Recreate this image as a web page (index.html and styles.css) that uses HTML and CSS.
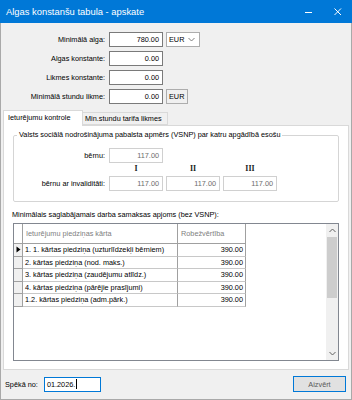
FILE: index.html
```html
<!DOCTYPE html>
<html>
    <head>
        <title>Algas konstanšu tabula - apskate</title>
        <link rel="stylesheet" href="styles.css">
    </head>

    <body>

        <div class="window">

            <div class="titlebar">
                <span class="title">Algas konstanšu tabula - apskate</span>
                <span class="win_btn min_btn">
                    <svg width="8" height="8" viewBox="0 0 8 8"><path d="M0 4.5h7" stroke="#fff" stroke-width="1"/></svg>
                </span>
                <span class="win_btn close_btn">
                    <svg width="8" height="8" viewBox="0 0 8 8"><path d="M0.5 0.5l6.5 6.5M7 0.5l-6.5 6.5" stroke="#fff" stroke-width="1"/></svg>
                </span>
            </div>

            <div class="content">

                <div class="fields">
                    <label>Minimālā alga:</label>
                    <div class="input">780.00</div>
                    <div class="select">EUR
                        <svg width="7" height="5" viewBox="0 0 7 5"><path d="M0.5 1l3 3 3-3" fill="none" stroke="#707070" stroke-width="0.9"/></svg>
                    </div>

                    <label>Algas konstante:</label>
                    <div class="input">0.00</div>
                    <div></div>

                    <label>Likmes konstante:</label>
                    <div class="input">0.00</div>
                    <div></div>

                    <label>Minimālā stundu likme:</label>
                    <div class="input">0.00</div>
                    <div class="unit">EUR</div>
                </div>

                <div class="tabs">
                    <div class="tab active">Ieturējumu kontrole</div>
                    <div class="tab">Min.stundu tarifa likmes</div>
                </div>

                <div class="panel">

                    <fieldset class="group">
                        <legend>Valsts sociālā nodrošinājuma pabalsta apmērs (VSNP) par katru apgādībā esošu</legend>
                        <div class="group_grid">
                            <label>bērnu:</label>
                            <div class="input disabled">117.00</div>
                            <div></div>
                            <div></div>

                            <div></div>
                            <div class="roman">I</div>
                            <div class="roman">II</div>
                            <div class="roman">III</div>

                            <label>bērnu ar invaliditāti:</label>
                            <div class="input disabled">117.00</div>
                            <div class="input disabled">117.00</div>
                            <div class="input disabled">117.00</div>
                        </div>
                    </fieldset>

                    <div class="caption">Minimālais saglabājamais darba samaksas apjoms (bez VSNP):</div>

                    <div class="datagrid">
                        <div class="rows">
                            <div class="row head">
                                <div class="sel"></div>
                                <div class="cell">Ieturējumu piedziņas kārta</div>
                                <div class="cell">Robežvērtība</div>
                            </div>
                            <div class="row">
                                <div class="sel current">
                                    <svg width="5" height="7" viewBox="0 0 5 7"><path d="M0.5 0.5L4.5 3.5L0.5 6.5Z" fill="#000"/></svg>
                                </div>
                                <div class="cell">1. 1. kārtas piedziņa (uzturlīdzekļi bērniem)</div>
                                <div class="cell num">390.00</div>
                            </div>
                            <div class="row">
                                <div class="sel"></div>
                                <div class="cell">2. kārtas piedziņa (nod. maks.)</div>
                                <div class="cell num">390.00</div>
                            </div>
                            <div class="row">
                                <div class="sel"></div>
                                <div class="cell">3. kārtas piedziņa (zaudējumu atlīdz.)</div>
                                <div class="cell num">390.00</div>
                            </div>
                            <div class="row">
                                <div class="sel"></div>
                                <div class="cell">4. kārtas piedziņa (pārējie prasījumi)</div>
                                <div class="cell num">390.00</div>
                            </div>
                            <div class="row">
                                <div class="sel"></div>
                                <div class="cell">1.2. kārtas piedziņa (adm.pārk.)</div>
                                <div class="cell num">390.00</div>
                            </div>
                        </div>

                        <div class="scrollbar">
                            <div class="arrow">
                                <svg width="7" height="5" viewBox="0 0 7 5"><path d="M0.5 4l3-3 3 3" fill="none" stroke="#606060" stroke-width="1"/></svg>
                            </div>
                            <div class="track">
                                <div class="thumb"></div>
                            </div>
                            <div class="arrow">
                                <svg width="7" height="5" viewBox="0 0 7 5"><path d="M0.5 1l3 3 3-3" fill="none" stroke="#606060" stroke-width="1"/></svg>
                            </div>
                        </div>
                    </div>

                </div>

                <div class="footer">
                    <label>Spēkā no:</label>
                    <div class="date_input">01.2026.<span class="caret"></span></div>
                    <button type="button" class="close_button">Aizvērt</button>
                </div>

            </div>

        </div>

    </body>
</html>
```

FILE: styles.css
```css
* {
    box-sizing: border-box;
}

body {
    margin: 0;
    font-family: "Liberation Sans", Arial, sans-serif;
    font-size: 7.3px;
    color: #000;
    background: #ffffff;
}

.window {
    width: 352px;
    height: 400px;
    display: flex;
    flex-direction: column;
}

.titlebar {
    height: 23px;
    background-color: #0078d7;
    color: #fff;
    display: flex;
    align-items: center;
    padding-left: 6px;
    font-size: 9.4px;
}

.title {
    flex: 1;
}

.win_btn {
    height: 23px;
    display: flex;
    align-items: center;
    justify-content: center;
}

.min_btn {
    width: 30px;
}

.close_btn {
    width: 28px;
}

.content {
    flex: 1;
    background-color: #f0f0f0;
    border: 1px solid #a9a9a9;
    border-top: none;
}

/* top fields */

.fields {
    display: grid;
    grid-template-columns: 105px 54px 34px;
    grid-auto-rows: 15px;
    column-gap: 3px;
    row-gap: 4px;
    margin-top: 9px;
}

label {
    text-align: right;
    align-self: center;
    padding-right: 1px;
    white-space: nowrap;
}

.input {
    background: #fff;
    border: 1px solid #7a7a7a;
    text-align: right;
    padding-right: 3px;
    line-height: 13px;
}

.input.disabled {
    border-color: #d0d0d0;
    color: #6d6d6d;
}

.select {
    background: #fff;
    border: 1px solid #adadad;
    display: flex;
    align-items: center;
    justify-content: space-between;
    padding: 0 4px 0 2px;
}

.unit {
    width: 22px;
    border: 1px solid #adadad;
    background: #f0f0f0;
    padding-left: 2px;
    line-height: 13px;
}

/* tabs */

.tabs {
    display: flex;
    align-items: flex-end;
    height: 15px;
    margin: 6px 2px 0;
}

.tab {
    height: 13px;
    line-height: 11px;
    border: 1px solid #d9d9d9;
    border-left: none;
    background: #f0f0f0;
    width: 85px;
    padding-left: 2px;
}

.tab.active {
    height: 16px;
    line-height: 14px;
    margin-bottom: -1px;
    border-left: 1px solid #d9d9d9;
    border-bottom: none;
    background: #fff;
    width: 80px;
    padding-left: 4px;
    position: relative;
    z-index: 1;
}

.panel {
    height: 245px;
    margin: 0 2px;
    border: 1px solid #d9d9d9;
    background: #fff;
}

/* group box */

.group {
    margin: 4px 0 0 9px;
    width: 326px;
    padding: 0 0 10px 0;
    border: 1px solid #d5d5d5;
    border-radius: 2px;
    min-width: 0;
}

.group legend {
    line-height: 10px;
    margin-left: 3px;
    padding: 0 2px;
}

.group_grid {
    display: grid;
    grid-template-columns: 92px 54px 54px 54px;
    grid-template-rows: 15px 13px 15px;
    column-gap: 3px;
    margin-top: 8px;
}

.roman {
    font-family: "Liberation Serif", "Times New Roman", serif;
    font-size: 8px;
    font-weight: bold;
    text-align: center;
    line-height: 11px;
    color: #222;
}

.caption {
    margin: 8px 0 0 8px;
    line-height: 10px;
}

/* data grid */

.datagrid {
    display: flex;
    margin: 3px 0 0 9px;
    width: 326px;
    height: 138px;
    border: 1px solid #828790;
    background: #fff;
}

.rows {
    flex: 1;
}

.row {
    display: grid;
    grid-template-columns: 9px 155px 68px;
    height: 12.5px;
}

.row.head {
    height: 20px;
}

.sel {
    background: #f0f0f0;
    border-right: 1px solid #a0a0a0;
    border-bottom: 1px solid #a0a0a0;
    display: flex;
    align-items: center;
    justify-content: center;
}

.cell {
    border-right: 1px solid #a0a0a0;
    border-bottom: 1px solid #c8c8c8;
    padding: 0 2px;
    line-height: 11.5px;
    white-space: nowrap;
    overflow: hidden;
}

.head .cell {
    color: #808080;
    line-height: 19px;
    padding-left: 3px;
    border-bottom-color: #a0a0a0;
}

.head .sel {
    background: #fff;
}

.cell.num {
    text-align: right;
}

.scrollbar {
    width: 12px;
    display: flex;
    flex-direction: column;
    background: #f0f0f0;
}

.arrow {
    height: 13px;
    display: flex;
    align-items: center;
    justify-content: center;
}

.track {
    flex: 1;
}

.thumb {
    height: 61px;
    margin: 0 1px;
    background: #cdcdcd;
}

/* footer */

.footer {
    display: flex;
    align-items: center;
    height: 16px;
    margin: 6px 0 0 4px;
}

.date_input {
    width: 57px;
    height: 15px;
    margin-left: 5px;
    border: 1px solid #0078d7;
    background: #fff;
    padding-left: 2px;
    line-height: 13px;
    display: flex;
    align-items: center;
}

.caret {
    display: inline-block;
    width: 1px;
    height: 10px;
    background: #000;
    margin-left: 1px;
}

.close_button {
    margin-left: auto;
    margin-right: 5px;
    width: 53px;
    height: 16px;
    border: 1px solid #0078d7;
    background: #e1e1e1;
    color: #5a5a5a;
    font-family: "Liberation Sans", Arial, sans-serif;
    font-size: 7.3px;
    padding: 0;
}
```
